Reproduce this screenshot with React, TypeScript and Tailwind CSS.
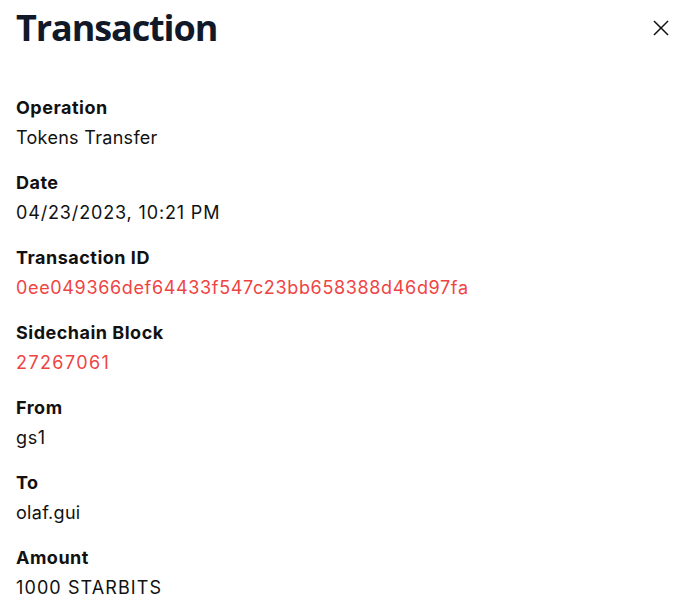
import React from "react";

const rows: { label: string; value: string; cls: string }[] = [
  { label: "Operation", value: "Tokens Transfer", cls: "text-[#111] tracking-[0.3px]" },
  { label: "Date", value: "04/23/2023, 10:21 PM", cls: "text-[#111] tracking-[0.85px]" },
  { label: "Transaction ID", value: "0ee049366def64433f547c23bb658388d46d97fa", cls: "text-[#ef4444] tracking-[0.65px]" },
  { label: "Sidechain Block", value: "27267061", cls: "text-[#ef4444] tracking-[1.4px]" },
  { label: "From", value: "gs1", cls: "text-[#111] tracking-[0.6px]" },
  { label: "To", value: "olaf.gui", cls: "text-[#111] tracking-[0.3px]" },
  { label: "Amount", value: "1000 STARBITS", cls: "text-[#111] tracking-[1.1px]" },
];

export default function App() {
  return (
    <div
      className="w-[693px] h-[614px] overflow-hidden bg-white px-4 pt-2"
      style={{ fontFamily: 'Inter, "Open Sans", sans-serif' }}
    >
      <div className="flex items-center justify-between">
        <h1
          className="text-[36px] leading-[40px] font-bold text-[#111827] tracking-[-1.1px]"
          style={{ fontFamily: '"Open Sans", sans-serif' }}
        >
          Transaction
        </h1>
        <button className="mr-[4px] w-[24px] h-[24px] flex items-center justify-center text-[#111]">
          <svg width="16" height="16" viewBox="0 0 16 16" fill="none" stroke="currentColor" strokeWidth="1.5" strokeLinecap="square">
            <line x1="1.5" y1="1.5" x2="14.5" y2="14.5" />
            <line x1="14.5" y1="1.5" x2="1.5" y2="14.5" />
          </svg>
        </button>
      </div>
      <div className="mt-[45px] flex flex-col gap-[15px]">
        {rows.map((r) => (
          <div key={r.label} className="flex flex-col">
            <div className="text-[18px] leading-[30px] font-bold tracking-[0.5px] text-[#111]">{r.label}</div>
            <div className={`text-[18px] leading-[30px] ${r.cls}`}>{r.value}</div>
          </div>
        ))}
      </div>
    </div>
  );
}
